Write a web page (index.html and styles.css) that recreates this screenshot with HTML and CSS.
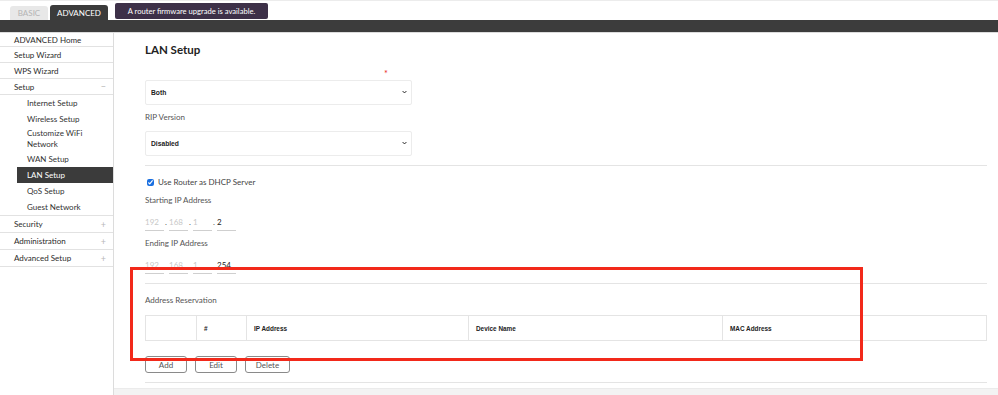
FILE: index.html
```html
<!DOCTYPE html>
<html lang="en">
<head>
    <meta charset="UTF-8">
    <meta name="viewport" content="width=device-width, initial-scale=1.0">
    <title>LAN Setup</title>

    <link rel="stylesheet" href="styles.css">
</head>
<body>
    <div class="topbar">
        <div class="tab basic">BASIC</div>
        <div class="tab active">ADVANCED</div>
        <div class="notice">A router firmware upgrade is available.</div>
    </div>
    <div class="darkbar"></div>

    <div class="layout">
        <nav class="sidebar">
            <div class="navitem first">ADVANCED Home</div>
            <div class="navitem">Setup Wizard</div>
            <div class="navitem">WPS Wizard</div>
            <div class="navitem">Setup <span class="sign">&minus;</span></div>
            <div class="sublist">
                <div class="subitem">Internet Setup</div>
                <div class="subitem">Wireless Setup</div>
                <div class="subitem twoline">Customize WiFi Network</div>
                <div class="subitem">WAN Setup</div>
                <div class="subitem current">LAN Setup</div>
                <div class="subitem">QoS Setup</div>
                <div class="subitem">Guest Network</div>
            </div>
            <div class="navitem group">Security <span class="sign">+</span></div>
            <div class="navitem group">Administration <span class="sign">+</span></div>
            <div class="navitem group">Advanced Setup <span class="sign">+</span></div>
        </nav>

        <main class="content">
            <h1>LAN Setup</h1>

            <div class="reqrow"><span class="req">*</span></div>
            <div class="selectbox">
                <select id="ripdir">
                    <option>Both</option>
                    <option>In only</option>
                    <option>Out only</option>
                </select>
                <svg class="chev" viewBox="0 0 8 5" width="5" height="4"><path d="M1 1 L4 4 L7 1" fill="none" stroke="#222" stroke-width="1.6"/></svg>
            </div>

            <div class="label">RIP Version</div>
            <div class="selectbox">
                <select id="ripver">
                    <option>Disabled</option>
                    <option>RIP-1</option>
                    <option>RIP-2</option>
                </select>
                <svg class="chev" viewBox="0 0 8 5" width="5" height="4"><path d="M1 1 L4 4 L7 1" fill="none" stroke="#222" stroke-width="1.6"/></svg>
            </div>

            <div class="divider"></div>

            <label class="checkrow"><input type="checkbox" checked> Use Router as DHCP Server</label>

            <div class="label">Starting IP Address</div>
            <div class="iprow">
                <input class="octet fixed" value="192" readonly><span class="dot">.</span>
                <input class="octet fixed" value="168" readonly><span class="dot">.</span>
                <input class="octet fixed" value="1" readonly><span class="dot">.</span>
                <input class="octet" value="2">
            </div>

            <div class="label">Ending IP Address</div>
            <div class="iprow">
                <input class="octet fixed" value="192" readonly><span class="dot">.</span>
                <input class="octet fixed" value="168" readonly><span class="dot">.</span>
                <input class="octet fixed" value="1" readonly><span class="dot">.</span>
                <input class="octet" value="254">
            </div>

            <div class="divider"></div>

            <div class="label reserve">Address Reservation</div>
            <table class="restable">
                <tr>
                    <th class="c-sel"></th>
                    <th class="c-num">#</th>
                    <th class="c-ip">IP Address</th>
                    <th class="c-name">Device Name</th>
                    <th>MAC Address</th>
                </tr>
            </table>

            <div class="buttons">
                <button class="btn add">Add</button>
                <button class="btn edit">Edit</button>
                <button class="btn del">Delete</button>
            </div>

            <div class="divider last"></div>
            <div class="footer"></div>
        </main>
    </div>

    <div class="annotation"></div>
</body>
</html>
```

FILE: styles.css
```css
html, body
{
    margin: 0;
    padding: 0;
    height: 100%;
    overflow: hidden;
}

body
{
    background: #fff;
    font-family: Lato, 'Open Sans', sans-serif;
    color: #333;
    position: relative;
}

.topbar
{
    height: 19px;
    border-top: 1px solid #ececec;
    display: flex;
    align-items: flex-end;
    padding-left: 10px;
}

.tab
{
    display: flex;
    align-items: center;
    justify-content: center;
    font-size: 8px;
    border-radius: 3px 3px 0 0;
}

.basic
{
    width: 38px;
    height: 14px;
    margin-right: 2px;
    background: #e8e8e8;
    color: #b4b4b4;
}

.active
{
    width: 58px;
    height: 15px;
    background: #3b3b3b;
    color: #fff;
}

.notice
{
    align-self: flex-start;
    margin-top: 2px;
    margin-left: 7px;
    width: 153px;
    height: 16px;
    background: #3d3048;
    color: #fff;
    font-size: 7.6px;
    border-radius: 2px;
    display: flex;
    align-items: center;
    justify-content: center;
}

.darkbar
{
    height: 12px;
    background: #3c3c3c;
    border-bottom: 1px solid #dcdcdc;
}

.layout
{
    display: flex;
    height: 362px;
}

.sidebar
{
    width: 113px;
    border-right: 1px solid #dcdcdc;
    font-size: 8px;
    color: #2c2c2c;
}

.navitem
{
    height: 15px;
    padding-left: 14px;
    padding-right: 7px;
    display: flex;
    align-items: center;
    justify-content: space-between;
    border-bottom: 1px solid #e2e2e2;
}

.navitem.first
{
    height: 13px;
}

.navitem.group
{
    height: 16px;
}

.sign
{
    color: #b8b8b8;
    font-size: 9px;
}

.sublist
{
    padding: 0 0 0 17px;
    border-bottom: 1px solid #e2e2e2;
}

.subitem
{
    height: 16px;
    padding-left: 10px;
    display: flex;
    align-items: center;
    color: #333;
}

.subitem.twoline
{
    height: 24px;
    width: 56px;
    line-height: 11px;
}

.subitem.current
{
    background: #3b3b3b;
    color: #fff;
}

.content
{
    flex: 1;
    padding: 0 11px 0 31px;
    display: flex;
    flex-direction: column;
}

h1
{
    margin: 9px 0 0 0;
    font-size: 11.5px;
    line-height: 16px;
    font-weight: 700;
    color: #222;
}

.reqrow
{
    margin-top: 7px;
    height: 10px;
    line-height: 12px;
    width: 267px;
}

.req
{
    margin-left: 239px;
    color: #e8231b;
    font-size: 9px;
}

.selectbox
{
    position: relative;
    width: 267px;
    height: 25px;
    margin-top: 4px;
}

.selectbox select
{
    appearance: none;
    width: 100%;
    height: 100%;
    border: 1px solid #ececec;
    border-radius: 2px;
    background: #fff;
    padding: 0 0 0 5px;
    font-family: 'Liberation Sans', Arial, sans-serif;
    font-size: 6.7px;
    font-weight: bold;
    color: #222;
}

.chev
{
    position: absolute;
    right: 5px;
    top: 11px;
}

.label
{
    margin-top: 7px;
    height: 12px;
    line-height: 12px;
    font-size: 8px;
    color: #555;
}

.label + .selectbox
{
    margin-top: 7px;
}

.divider
{
    margin-top: 10px;
    height: 1px;
    background: #e4e4e4;
}

.checkrow
{
    margin-top: 10px;
    height: 12px;
    display: flex;
    align-items: center;
    font-size: 8px;
    color: #444;
}

.checkrow input
{
    width: 7px;
    height: 7px;
    margin: 0 4px 0 2px;
    accent-color: #1a6fe0;
}

.checkrow + .label
{
    margin-top: 6px;
}

.iprow
{
    margin-top: 7px;
    height: 18px;
    display: flex;
}

.octet
{
    width: 19px;
    height: 17px;
    padding: 0;
    border: none;
    border-bottom: 1px solid #cfcfcf;
    font-family: Lato, sans-serif;
    font-size: 8px;
    color: #222;
    outline: none;
}

.octet.fixed
{
    color: #c8c8c8;
}

.dot
{
    width: 4px;
    margin-right: 1px;
    font-size: 8px;
    color: #555;
    padding-top: 4px;
    text-align: center;
}

.iprow + .label
{
    margin-top: 6px;
}

.iprow + .divider
{
    margin-top: 9px;
}

.label.reserve
{
    margin-top: 10px;
}

.restable
{
    margin-top: 9px;
    width: 100%;
    height: 26px;
    table-layout: fixed;
    border-collapse: collapse;
    border: 1px solid #e4e4e4;
}

.restable th
{
    box-sizing: border-box;
    border-left: 1px solid #e4e4e4;
    text-align: left;
    padding: 0 0 0 7px;
    font-family: 'Liberation Sans', Arial, sans-serif;
    font-size: 6.4px;
    font-weight: bold;
    color: #222;
}

.c-sel { width: 51px; }
.c-num { width: 50px; }
.c-ip { width: 222px; }
.c-name { width: 254px; }

.buttons
{
    margin-top: 15px;
    display: flex;
    gap: 8px;
}

.btn
{
    height: 17px;
    width: 42px;
    padding: 0;
    background: #fff;
    border: 1px solid #8a8a8a;
    border-radius: 3px;
    font-family: Lato, sans-serif;
    font-size: 8px;
    color: #555;
}

.btn.del
{
    width: 45px;
}

.divider.last
{
    margin-top: 9px;
}

.footer
{
    margin: 5px -11px 0 -31px;
    flex: 1;
    background: #f3f3f3;
    border-top: 1px solid #ebebeb;
}

.annotation
{
    position: absolute;
    left: 130px;
    top: 267px;
    width: 727px;
    height: 88px;
    border: 3px solid #f2291a;
}
```
